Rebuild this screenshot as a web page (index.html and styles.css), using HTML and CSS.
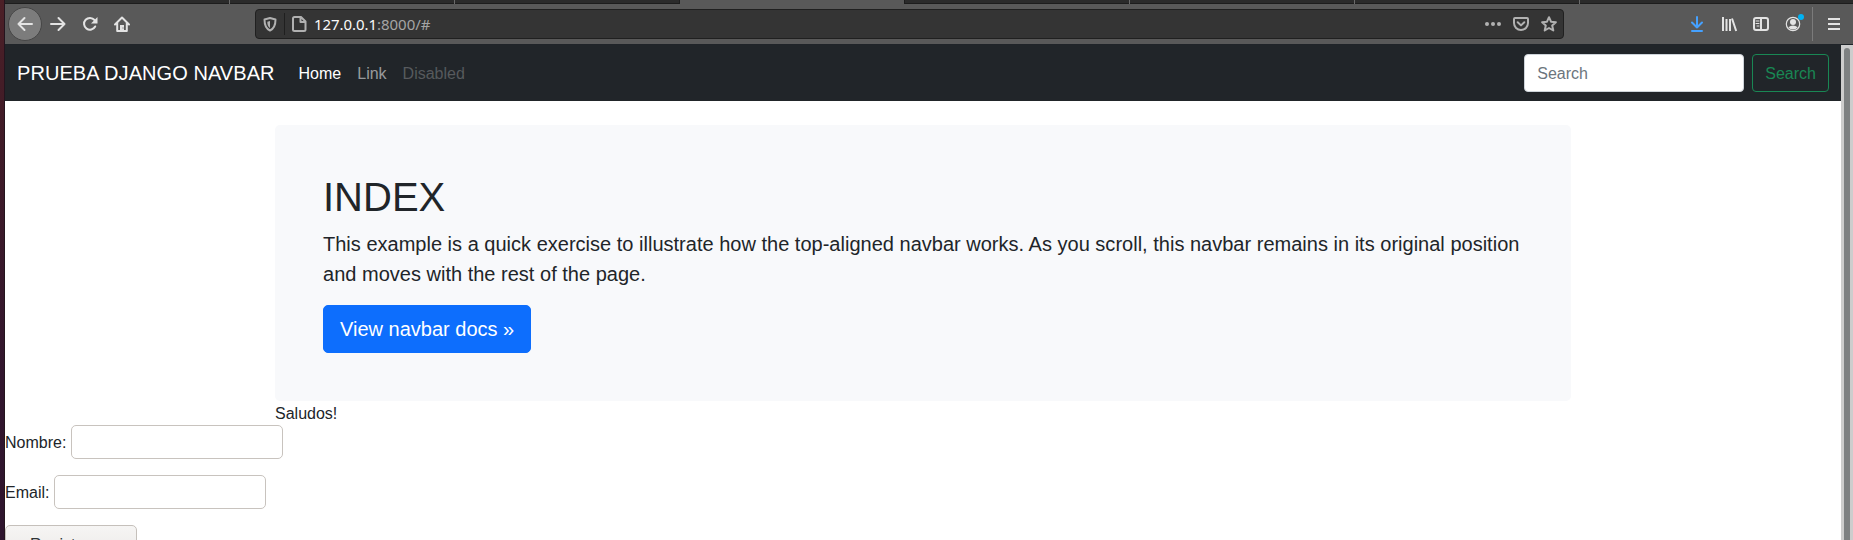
FILE: index.html
```
<!DOCTYPE html>
<html lang="es">
<head>
<meta charset="utf-8">
<title>Prueba Django Navbar</title>
<link rel="stylesheet" href="styles.css">
</head>
<body>
<div class="desktop-edge"></div>
<div class="browser">
  <div class="tabs"><i class="tab"></i><i class="tab"></i><i class="tab tab-before"></i><i class="tab tab-active"></i><i class="tab"></i><i class="tab"></i><i class="tab"></i><i class="tab tab-rest"></i></div>
  <div class="toolbar">
    <div class="nav-icons">
      <span class="back"><svg class="icon" viewBox="0 0 16 16"><path d="M15 8H1.500M7.500 2L1.500 8l6 6"/></svg></span>
      <svg class="icon" viewBox="0 0 16 16"><path d="M1 8h13.500M8.500 2l6 6-6 6"/></svg>
      <svg class="icon" viewBox="0 0 16 16"><path d="M13.200 10.500A5.900 5.900 0 1 1 12.500 4"/><path class="solid" d="M15.500 1v6.500H9z"/></svg>
      <svg class="icon" viewBox="0 0 16 16"><path d="M1 8.500L8 1.500l7 7M3.200 7v8h9.600V7"/><path class="solid" d="M6 9h4v6H6z"/><path class="door" d="M8.500 12h1"/></svg>
    </div>
    <div class="urlbar">
      <svg class="icon shield" viewBox="0 0 16 16"><path d="M8 2L2.500 3.500c0 5 1 9 5.500 11 4.500-2 5.500-6 5.500-11z"/><path class="solid" d="M8 5L5.300 5.700c0 3 .7 5 2.700 6.300z"/></svg>
      <i class="url-rule"></i>
      <svg class="icon page-icon" viewBox="0 0 16 16"><path d="M3.500 1H10l4.500 4.500v8a1.500 1.500 0 0 1-1.500 1.500H3.500A1.500 1.500 0 0 1 2 13.500v-11A1.500 1.500 0 0 1 3.500 1zM9.500 1v5h5"/></svg>
      <span class="url">127.0.0.1<span class="url-dim">:8000/#</span></span>
      <div class="url-actions">
        <svg class="icon" viewBox="0 0 16 16"><circle class="solid" cx="2" cy="8" r="2"/><circle class="solid" cx="8" cy="8" r="2"/><circle class="solid" cx="14" cy="8" r="2"/></svg>
        <svg class="icon" viewBox="0 0 16 16"><path d="M2 2h12a1 1 0 0 1 1 1v4a7 7 0 0 1-14 0V3a1 1 0 0 1 1-1zM4.700 6.200L8 9.400l3.300-3.200"/></svg>
        <svg class="icon" viewBox="0 0 16 16"><path d="M8 1.200l2 4.500 4.900.5-3.700 3.300 1.100 5L8 12l-4.300 2.500 1.100-5L1.100 6.200 6 5.700z"/></svg>
      </div>
    </div>
    <div class="tools">
      <svg class="icon download" viewBox="0 0 16 16"><path d="M8 1v10.500M3 6.500l5 5 5-5M3 15h10"/></svg>
      <svg class="icon library" viewBox="0 0 16 16"><path d="M2 1v14M5.500 3v12M9 3v12M11 2.500L15.200 15"/></svg>
      <svg class="icon" viewBox="0 0 16 16"><rect x="1" y="2" width="14" height="12" rx="2"/><path d="M8 2v12"/><path class="thin" d="M3 5h3M3 7.500h3M4 10h2"/></svg>
      <span class="account">
        <svg class="icon" viewBox="0 0 16 16"><circle class="ring" cx="8" cy="8" r="6.700"/><circle class="solid" cx="8" cy="6" r="3"/><path class="solid" d="M3.300 11.200Q5.500 9.500 8 9.500t4.700 1.700Q11 13.500 8 13.500t-4.700-2.300z"/></svg>
        <i class="badge"></i>
      </span>
      <i class="tool-rule"></i>
      <svg class="icon menu" viewBox="0 0 16 16"><path d="M2 3h12M2 8h12M2 13h12"/></svg>
    </div>
  </div>
  <div class="viewport">
    <div class="page">
      <nav class="navbar">
        <a class="brand">PRUEBA DJANGO NAVBAR</a>
        <div class="links"><a class="link active">Home</a><a class="link">Link</a><a class="link disabled">Disabled</a></div>
        <form class="search"><input class="search-input" type="text" placeholder="Search"><button class="search-button" type="button">Search</button></form>
      </nav>
      <main class="container">
        <div class="jumbotron">
          <h1 class="title">INDEX</h1>
          <p class="lead">This example is a quick exercise to illustrate how the top-aligned navbar works. As you scroll, this navbar remains in its original position and moves with the rest of the page.</p>
          <a class="docs-button">View navbar docs »</a>
        </div>
        <p class="greeting">Saludos!</p>
      </main>
      <form class="register">
        <label class="field"><span class="field-label">Nombre:</span><input class="field-input" type="text"></label>
        <label class="field"><span class="field-label">Email:</span><input class="field-input" type="text"></label>
        <button class="submit" type="button">Registrarse</button>
      </form>
    </div>
    <div class="scrollbar"><div class="thumb"></div></div>
  </div>
</div>
</body>
</html>
```
FILE: styles.css
```
* { box-sizing: border-box; }
body {
  margin: 0;
  display: flex;
  height: 540px;
  overflow: hidden;
  font: 16px/1.5 "Liberation Sans", Arial, sans-serif;
  color: #212529;
}
button, input { font: inherit; }

.desktop-edge {
  width: 5px;
  flex: none;
  background: linear-gradient(#4c2027, #421c27 20%, #32162e 70%, #2e152e);
  border-right: 1px solid #24141e;
}
.browser { flex: 1; min-width: 0; display: flex; flex-direction: column; }

.tabs { display: flex; height: 4px; flex: none; }
.tab {
  width: 225px;
  flex: none;
  background: #2b2b2b;
  border-right: 1px solid #6a6a6a;
  box-shadow: inset 0 -1px #1d1d1d;
}
.tab-before { border-right-color: #1d1d1d; }
.tab-active { background: #595959; box-shadow: none; border-right-color: #1d1d1d; }
.tab-rest { flex: 1; border: 0; }

.toolbar { display: flex; align-items: center; height: 41px; flex: none; background: #595959; border-bottom: 1px solid #202429; }
.icon { width: 16px; height: 16px; flex: none; display: block; overflow: visible; fill: none; stroke: currentColor; stroke-width: 2; stroke-linecap: round; stroke-linejoin: round; }
.icon .solid { fill: currentColor; stroke: none; }
.icon .thin { stroke-width: 1; }
.icon .ring { stroke-width: 1.2; }
.icon .door { stroke: #595959; stroke-width: 1; stroke-linecap: butt; }
.nav-icons { display: flex; align-items: center; width: 250px; padding-left: 3px; gap: 16px; color: #e3e3e3; }
.back { display: grid; place-items: center; width: 34px; height: 34px; margin-right: -8px; border-radius: 50%; background: #7c7c7c; border: 1px solid #464646; }

.urlbar { display: flex; align-items: center; width: 1309px; height: 30px; padding: 0 6px; background: #343434; border: 1px solid #202020; border-radius: 4px; color: #b1b1b1; }
.url-rule { width: 1px; height: 22px; margin: 0 6px; background: #1f1f1f; }
.url { margin-left: 7px; font: 15px/28px "Noto Sans", sans-serif; letter-spacing: -0.05px; color: #fafafa; }
.url-dim { color: #a5a5a5; }
.url-actions { display: flex; gap: 12px; margin-left: auto; }

.tools { display: flex; align-items: center; flex: 1; padding-left: 125px; gap: 16px; color: #e3e3e3; }
.download { color: #45a1ff; }
.library { stroke-linecap: butt; }
.account { position: relative; }
.badge { position: absolute; right: -3px; top: -2px; width: 6px; height: 6px; border-radius: 50%; background: #00b3f4; }
.tool-rule { width: 1px; height: 34px; margin-left: -5px; background: #7b7b7b; }
.menu { margin-left: -3px; stroke-linecap: butt; }

.viewport { display: flex; flex: 1; min-height: 0; background: #fff; }
.page { flex: 1; min-width: 0; overflow: hidden; }
.scrollbar { width: 12px; padding: 3px 3px 0; background: #cdcdcd; }
.thumb { width: 6px; height: 100%; border-radius: 3px 3px 0 0; background: #7e8182; }

.navbar { display: flex; align-items: center; height: 56px; padding: 0 12px; background: #212529; }
.brand { margin-right: 16px; font-size: 20px; line-height: 30px; letter-spacing: 0.06px; color: #fff; }
.links { display: flex; }
.link { padding: 9px 8px 7px; color: rgba(255, 255, 255, .55); }
.link.active { color: #fff; }
.link.disabled { color: rgba(255, 255, 255, .25); }
.search { display: flex; gap: 8px; margin-left: auto; }
.search-input { width: 220px; height: 38px; padding: 7px 12px 5px; border: 1px solid #ced4da; border-radius: 4px; background: #fff; }
.search-input::placeholder { color: #6c757d; opacity: 1; }
.search-button { height: 38px; padding: 7px 12px 5px; border: 1px solid #198754; border-radius: 4px; background: transparent; color: #198754; }

.container { max-width: 1320px; margin: 24px auto 0; padding: 0 12px; }
.jumbotron { padding: 48px; border-radius: 5px; background: #f8f9fb; }
.title { margin: 0 0 8px; font-size: 40px; line-height: 48px; font-weight: 500; }
.lead { margin: 0 0 16px; font-size: 20px; line-height: 30px; letter-spacing: 0.01px; }
.docs-button { display: block; width: fit-content; padding: 8px 16px; border: 1px solid #0d6efd; border-radius: 5px; background: #0d6efd; color: #fff; font-size: 20px; line-height: 30px; }
.greeting { margin: 0; height: 24px; padding-top: 1px; }

.register { display: grid; gap: 16px; justify-items: start; }
.field { display: flex; align-items: center; gap: 5px; }
.field-label { padding-top: 2px; }
.field-input { width: 212px; height: 34px; border: 1px solid #c8c3be; border-radius: 5px; background: #fff; }
.submit { width: 132px; height: 36px; padding: 3px 0 0; border: 1px solid #c5c0bb; border-radius: 5px; background: linear-gradient(#f6f5f4, #ebe9e7); color: #2e3436; }
```
